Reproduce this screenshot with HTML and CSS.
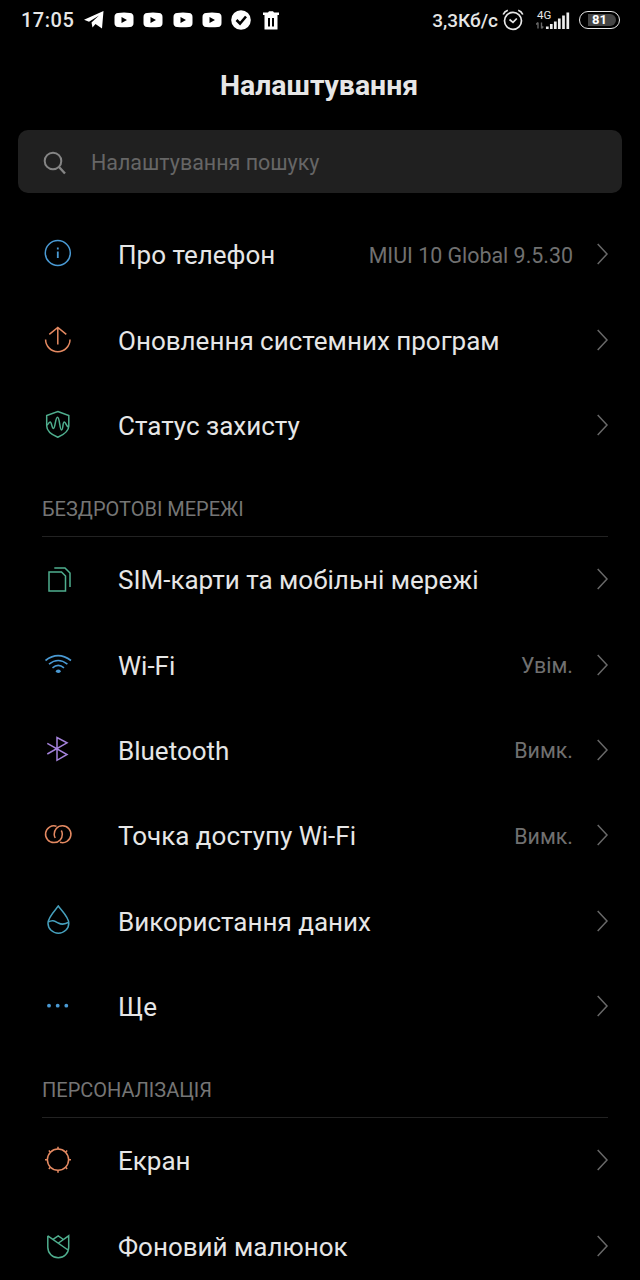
FILE: index.html
```html
<!DOCTYPE html>
<html lang="uk">
<head>
  <meta charset="UTF-8" />
  <meta name="viewport" content="width=device-width, initial-scale=1.0" />
  <title>Налаштування</title>
  <link rel="stylesheet" href="styles.css">
</head>
<body>
  <svg class="defs" width="0" height="0">
    <symbol id="youtube" viewBox="0 0 20 16">
      <path fill="#fff" fill-rule="evenodd" d="M4 1Q10 .2 16 1Q19.5 1.300 19.500 5V11Q19.500 14.700 16 15Q10 15.600 4 15Q.5 14.700 .5 11V5Q.5 1.300 4 1ZM7.500 5V11L13 8Z" />
    </symbol>
    <symbol id="chevron" viewBox="0 0 12 24">
      <path d="M.7 2L10 12L.7 22" fill="none" stroke="#686868" stroke-width="1.500" />
    </symbol>
  </svg>

  <header class="status-bar">
    <div class="status-left">
      <span class="clock">17:05</span>
      <svg class="telegram" width="20" height="18" viewBox="0 0 20 18"><path fill="#fff" d="M0 8.800L19.500 0L18 17.500L11.500 13L8.500 16.500L7.500 11.500L15 4.500L5 10.800Z" /></svg>
      <svg class="youtube" width="20" height="16"><use href="#youtube" /></svg>
      <svg class="youtube" width="20" height="16"><use href="#youtube" /></svg>
      <svg class="youtube" width="20" height="16"><use href="#youtube" /></svg>
      <svg class="youtube" width="20" height="16"><use href="#youtube" /></svg>
      <svg class="check" width="20" height="20" viewBox="0 0 20 20"><circle cx="10" cy="10" r="9.800" fill="#fff" /><path d="M5.500 10L9 13.500L15 6.500" fill="none" stroke="#000" stroke-width="2.600" /></svg>
      <svg class="trash" width="16" height="19" viewBox="0 0 16 19"><path fill="#fff" fill-rule="evenodd" d="M0 1.500H5L6 .3H10L11 1.500H16V4H0ZM1.500 4H14.500V18.500H1.500ZM5 7V15.500H7V7ZM9 7V15.500H11V7Z" /></svg>
    </div>
    <div class="status-right">
      <span class="speed">3,3Кб/с</span>
      <svg class="alarm" width="22" height="22" viewBox="0 0 22 22" fill="none" stroke="#e8e8e8" stroke-width="1.700"><circle cx="11" cy="11.800" r="8.500" /><path d="M7.500 10.500L11 13.300L14.800 9.500M1.200 5.500Q2.500 2.500 5.800 1.300M20.800 5.500Q19.500 2.500 16.200 1.300" /></svg>
      <div class="signal">
        <span class="network">4G</span>
        <svg width="34" height="19" viewBox="0 0 34 19">
          <path d="M2 11.500V17.500M0 13.500L2 11.500M5.500 11.500V17.500M7.300 15.500L5.500 17.500" fill="none" stroke="#666" stroke-width="1.400" />
          <path d="M11.300 15.500V18M15.300 13V18M19.300 10.500V18M23.300 7.500V18M27.500 4.500V18M31.800 1.500V18" fill="none" stroke="#eee" stroke-width="2.700" />
        </svg>
      </div>
      <div class="battery"><span class="battery-level">81</span></div>
    </div>
  </header>

  <h1>Налаштування</h1>

  <div class="search">
    <svg width="24" height="24" viewBox="0 0 24 24" fill="none" stroke="#858585" stroke-width="2"><circle cx="10" cy="10" r="8.300" /><path d="M16 16L22 22.500" stroke-width="2.400" /></svg>
    <span>Налаштування пошуку</span>
  </div>

  <main>
    <ul class="list">
      <li class="row">
        <svg class="icon blue" viewBox="0 0 32 32"><circle cx="15.800" cy="15" r="12.500" /><path d="M15.800 13.500V20M15.800 9.500V11.500" stroke-width="1.800" /></svg>
        <span class="label">Про телефон</span>
        <span class="value">MIUI 10 Global 9.5.30</span>
        <svg class="chevron"><use href="#chevron" /></svg>
      </li>
      <li class="row">
        <svg class="icon orange" viewBox="0 0 32 32"><path d="M3.600 15.500A12.200 12.200 0 0 0 28 15.500M15.800 20.500V3.500M7.300 10.300L15.800 3.500L24.300 10.300" /></svg>
        <span class="label">Оновлення системних програм</span>
        <svg class="chevron"><use href="#chevron" /></svg>
      </li>
      <li class="row">
        <svg class="icon green" viewBox="0 0 32 32"><path d="M15.800 2.500L26.800 6.500V17C26.800 22 21.500 25.800 15.800 28.300C10 25.800 4.700 22 4.700 17V6.500Z" /><path d="M4.700 16C6.300 16 6.700 13 8.200 13S9.800 19.500 11.500 19.500S13.300 8.300 15.500 8.300S17.700 21 19.500 21S20.500 13 22.300 13S24 18 26.800 18" /></svg>
        <span class="label">Статус захисту</span>
        <svg class="chevron"><use href="#chevron" /></svg>
      </li>
    </ul>

    <h2>БЕЗДРОТОВІ МЕРЕЖІ</h2>
    <ul class="list">
      <li class="row">
        <svg class="icon green" viewBox="0 0 32 32"><path d="M7 9H19.500L23.500 13V28H7ZM12.300 5H23L28 10V24" /></svg>
        <span class="label">SIM-карти та мобільні мережі</span>
        <svg class="chevron"><use href="#chevron" /></svg>
      </li>
      <li class="row">
        <svg class="icon blue" viewBox="0 0 32 32"><path d="M3.500 11.500Q16 1.800 29 11.500M7 15.200Q16.200 7.800 25.400 15.200M10.500 18.800Q16.200 14 22 18.800" stroke-width="1.600" /><ellipse cx="16.300" cy="22.300" rx="2.400" ry="1.800" class="fill" /></svg>
        <span class="label">Wi-Fi</span>
        <span class="value">Увім.</span>
        <svg class="chevron"><use href="#chevron" /></svg>
      </li>
      <li class="row">
        <svg class="icon purple" viewBox="0 0 32 32"><path d="M5.300 9.300L25 20.500L15 26.300V3.500L25 8.800L5.300 20" /></svg>
        <span class="label">Bluetooth</span>
        <span class="value">Вимк.</span>
        <svg class="chevron"><use href="#chevron" /></svg>
      </li>
      <li class="row">
        <svg class="icon orange" viewBox="0 0 32 32"><path d="M14.500 7.200A8.400 8.400 0 1 0 12 23.600C17.500 23.600 20.300 19.500 20.300 15.200Q20.300 13.200 19.300 11.500M18 23.200A8.400 8.400 0 1 0 20.500 6.800C15 6.800 12.200 11.200 12.200 15.200Q12.200 17.200 13.200 19" /></svg>
        <span class="label">Точка доступу Wi-Fi</span>
        <span class="value">Вимк.</span>
        <svg class="chevron"><use href="#chevron" /></svg>
      </li>
      <li class="row">
        <svg class="icon cyan" viewBox="0 0 32 32"><path d="M16.300 1C13.500 5 6 12 6 18.200A10.400 10 0 0 0 26.800 18.200C26.800 12 19 5 16.300 1ZM6 17.200C10.500 14.500 12.500 16 16.300 18S23 19.500 26.800 17.200" /></svg>
        <span class="label">Використання даних</span>
        <svg class="chevron"><use href="#chevron" /></svg>
      </li>
      <li class="row">
        <svg class="icon blue" viewBox="0 0 32 32"><g class="fill"><circle cx="7" cy="15.700" r="1.900" /><circle cx="15.700" cy="15.700" r="1.900" /><circle cx="24.300" cy="15.700" r="1.900" /></g></svg>
        <span class="label">Ще</span>
        <svg class="chevron"><use href="#chevron" /></svg>
      </li>
    </ul>

    <h2>ПЕРСОНАЛІЗАЦІЯ</h2>
    <ul class="list">
      <li class="row">
        <svg class="icon orange" viewBox="0 0 32 32"><circle cx="16" cy="15.700" r="10.600" /><path d="M16 5.100V2.700M16 26.300V28.700M5.400 15.700H3M26.600 15.700H29M8.500 8.200L6.800 6.500M23.500 8.200L25.200 6.500M8.500 23.200L6.800 24.900M23.500 23.200L25.200 24.900" /></svg>
        <span class="label">Екран</span>
        <svg class="chevron"><use href="#chevron" /></svg>
      </li>
      <li class="row">
        <svg class="icon green" viewBox="0 0 32 32"><path d="M5.800 5.800V17.300A10.400 10.400 0 0 0 26.700 17.300V5.800L16.500 13M5.800 5.800L26 20M11 9.300L16.200 5.800L21.500 9.500" /></svg>
        <span class="label">Фоновий малюнок</span>
        <svg class="chevron"><use href="#chevron" /></svg>
      </li>
    </ul>
  </main>
</body>
</html>
```
FILE: styles.css
```css
* {
  box-sizing: border-box;
}
body {
  margin: 0;
  height: 1280px;
  overflow: hidden;
  background: #000;
  color: #e6e6e6;
  font-family: Roboto, sans-serif;
}
.defs {
  display: block;
}
.status-bar {
  display: flex;
  justify-content: space-between;
  height: 40px;
  padding: 0 20px 0 21px;
}
.status-left,
.status-right {
  display: flex;
  align-items: center;
}
.clock {
  width: 63px;
  font-size: 20px;
  font-weight: 500;
  letter-spacing: 0.5px;
}
.youtube {
  margin-left: 9.6px;
}
.check {
  margin-left: 9px;
}
.trash {
  margin-left: 11.500px;
}
.speed {
  font-size: 19px;
  font-weight: 500;
}
.alarm {
  margin-left: 4px;
}
.signal {
  position: relative;
  width: 34px;
  height: 19px;
  margin-left: 12px;
}
.network {
  position: absolute;
  top: -1px;
  left: 1px;
  font-size: 11.5px;
  line-height: 11px;
}
.battery {
  width: 41px;
  height: 18px;
  margin-left: 9px;
  padding: 2px 3px;
  border: 1.5px solid #e8e8e8;
  border-radius: 9px;
}
.battery-level {
  display: block;
  width: 28px;
  padding-left: 4px;
  margin-left: 5px;
  background: #444;
  border-radius: 0 6px 6px 0;
  font-size: 13px;
  font-weight: 700;
  line-height: 12px;
  color: #fff;
}
h1 {
  margin: 0;
  height: 90px;
  font-size: 28.4px;
  font-weight: 700;
  line-height: 92px;
  text-align: center;
  text-indent: -2px;
}
.search {
  display: flex;
  align-items: center;
  gap: 24px;
  height: 63px;
  margin: 0 18px 18.6px;
  padding: 2px 25px 0;
  border-radius: 10px;
  background: #202020;
  color: #666;
  font-size: 21.450px;
}
.list {
  margin: 0;
  padding: 0;
  list-style: none;
}
.row {
  display: flex;
  align-items: center;
  height: 85.33px;
  padding: 0 31px 0 42px;
}
.icon {
  width: 32px;
  height: 32px;
  margin-right: 44px;
  fill: none;
  stroke: currentColor;
  stroke-width: 1.5;
}
.icon .fill {
  fill: currentColor;
  stroke: none;
}
.label {
  flex: 1;
  padding-top: 2px;
  font-size: 26px;
}
.value {
  padding-top: 2px;
  font-size: 21.4px;
  color: #707070;
}
.chevron {
  width: 12px;
  height: 24px;
  margin-left: 24px;
}
h2 {
  height: 69px;
  margin: 0 32px 0 42px;
  border-bottom: 1px solid #222;
  font-size: 20px;
  font-weight: 400;
  line-height: 83px;
  color: #757575;
}
.blue {
  color: #4a9ad4;
}
.cyan {
  color: #46a0bd;
}
.green {
  color: #4fae8e;
}
.orange {
  color: #e58a62;
}
.purple {
  color: #a583dc;
}
```
